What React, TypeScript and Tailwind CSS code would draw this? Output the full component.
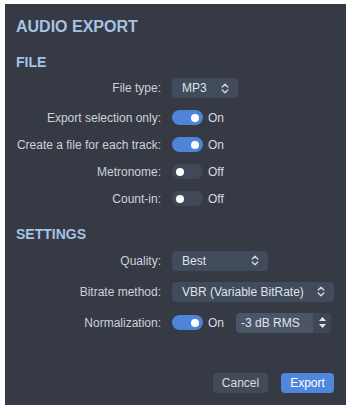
import type { ReactNode } from "react";

const FONT = { fontFamily: '"Liberation Sans", Arial, sans-serif' };

function Chevrons() {
  return (
    <svg width="8" height="11" viewBox="0 0 8 11" fill="none" stroke="#d5dae2" strokeWidth="1.3" strokeLinecap="round" strokeLinejoin="round">
      <path d="M1.2 4 L4 1.2 L6.8 4" />
      <path d="M1.2 7 L4 9.8 L6.8 7" />
    </svg>
  );
}

function Select({ value, width }: { value: string; width: string }) {
  return (
    <div className={`${width} h-[20px] rounded-[4px] bg-[#414b5b] flex items-center justify-between pl-[10px] pr-[9px] text-[12px] text-[#dfe3e8]`}>
      <span>{value}</span>
      <Chevrons />
    </div>
  );
}

function Toggle({ on }: { on: boolean }) {
  return (
    <div className="flex items-center gap-[5px]">
      <div
        className={`w-[31px] h-[15px] rounded-full flex items-center px-[4px] ${
          on ? "bg-[#4e85da] justify-end" : "bg-[#414959] justify-start"
        }`}
      >
        <div className="w-[8px] h-[8px] rounded-full bg-white" />
      </div>
      <span className="text-[12px] text-[#d6dae0]">{on ? "On" : "Off"}</span>
    </div>
  );
}

function Row({ label, h, children }: { label: string; h: string; children: ReactNode }) {
  return (
    <div className={`flex items-center ${h}`}>
      <div className="w-[145px] shrink-0 text-right text-[12px] text-[#cdd2d9] whitespace-nowrap">
        {label}
      </div>
      <div className="ml-[11px] flex items-center">{children}</div>
    </div>
  );
}

export default function App() {
  return (
    <div className="w-[350px] h-[410px] bg-white pt-[4px] pl-[5px]" style={FONT}>
      <div className="w-[341px] h-[401px] bg-[#363a45] flex flex-col pt-[13px] pl-[11px] pr-[12px] pb-[12px]">
        <h1 className="text-[16px] leading-[20px] font-bold text-[#a6c3e3]">AUDIO EXPORT</h1>

        <h2 className="mt-[16px] text-[14px] leading-[18px] font-bold text-[#a6c3e3]">FILE</h2>
        <div className="mt-[1px] flex flex-col">
          <Row label="File type:" h="h-[32px]">
            <Select value="MP3" width="w-[66px]" />
          </Row>
          <Row label="Export selection only:" h="h-[27px]">
            <Toggle on />
          </Row>
          <Row label="Create a file for each track:" h="h-[27px]">
            <Toggle on />
          </Row>
          <Row label="Metronome:" h="h-[27px]">
            <Toggle on={false} />
          </Row>
          <Row label="Count-in:" h="h-[27px]">
            <Toggle on={false} />
          </Row>
        </div>

        <h2 className="mt-[13px] text-[14px] leading-[18px] font-bold text-[#a6c3e3]">SETTINGS</h2>
        <div className="mt-[2px] flex flex-col">
          <Row label="Quality:" h="h-[31px]">
            <Select value="Best" width="w-[96px]" />
          </Row>
          <Row label="Bitrate method:" h="h-[31px]">
            <Select value="VBR (Variable BitRate)" width="w-[162px]" />
          </Row>
          <Row label="Normalization:" h="h-[31px]">
            <Toggle on />
            <div className="ml-[12px] w-[95px] h-[20px] rounded-[4px] flex overflow-hidden">
              <div className="flex-1 bg-[#4a5567] flex items-center pl-[5px] text-[12px] text-[#e2e6eb]">
                -3 dB RMS
              </div>
              <div className="w-[18px] bg-[#3f4757] flex flex-col items-center justify-center gap-[3px]">
                <svg width="7" height="4" viewBox="0 0 7 4">
                  <path d="M0 4 L3.5 0 L7 4 Z" fill="#e4e8ee" />
                </svg>
                <svg width="7" height="4" viewBox="0 0 7 4">
                  <path d="M0 0 L3.5 4 L7 0 Z" fill="#e4e8ee" />
                </svg>
              </div>
            </div>
          </Row>
        </div>

        <div className="mt-auto flex justify-end gap-[13px]">
          <button className="w-[55px] h-[20px] rounded-[4px] bg-[#434b5a] text-[12px] text-[#d9dde3]">
            Cancel
          </button>
          <button className="w-[53px] h-[20px] rounded-[4px] bg-[#4f87dc] text-[12px] text-white">
            Export
          </button>
        </div>
      </div>
    </div>
  );
}
